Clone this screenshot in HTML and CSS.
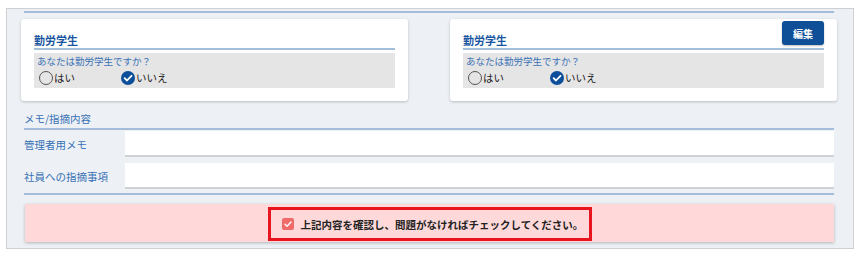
FILE: index.html
```html
<!DOCTYPE html>
<html lang="ja">
<head>
    <meta charset="UTF-8">
    <meta name="viewport" content="width=device-width, initial-scale=1.0">
    <title>勤労学生</title>
    <link rel="stylesheet" href="styles.css">
</head>
<body>

    <div class="panel">
        <div class="top-line"></div>

        <div class="cards">
            <div class="card">
                <div class="card-head">
                    <h3 class="card-title">勤労学生</h3>
                </div>
                <div class="question-box">
                    <div class="question">あなたは勤労学生ですか？</div>
                    <div class="radios">
                        <label class="radio">
                            <span class="radio-mark"></span>はい
                        </label>
                        <label class="radio">
                            <span class="radio-mark checked">
                                <svg viewBox="0 0 14 14" width="14" height="14"><path d="M3.6 7.2 L6 9.5 L10.5 4.8" fill="none" stroke="#fff" stroke-width="1.8" stroke-linecap="round" stroke-linejoin="round"/></svg>
                            </span>いいえ
                        </label>
                    </div>
                </div>
            </div>

            <div class="card">
                <div class="card-head">
                    <h3 class="card-title">勤労学生</h3>
                    <button class="edit-button">編集</button>
                </div>
                <div class="question-box">
                    <div class="question">あなたは勤労学生ですか？</div>
                    <div class="radios">
                        <label class="radio">
                            <span class="radio-mark"></span>はい
                        </label>
                        <label class="radio">
                            <span class="radio-mark checked">
                                <svg viewBox="0 0 14 14" width="14" height="14"><path d="M3.6 7.2 L6 9.5 L10.5 4.8" fill="none" stroke="#fff" stroke-width="1.8" stroke-linecap="round" stroke-linejoin="round"/></svg>
                            </span>いいえ
                        </label>
                    </div>
                </div>
            </div>
        </div>

        <div class="memo">
            <div class="memo-head">メモ/指摘内容</div>
            <div class="memo-row">
                <div class="memo-label">管理者用メモ</div>
                <input type="text" class="memo-input">
            </div>
            <div class="memo-row">
                <div class="memo-label">社員への指摘事項</div>
                <input type="text" class="memo-input">
            </div>
        </div>

        <div class="confirm-bar">
            <label class="confirm-box">
                <span class="check-mark">
                    <svg viewBox="0 0 12 12" width="12" height="12"><path d="M3 6.2 L5.1 8.2 L9 4" fill="none" stroke="#fff" stroke-width="1.4" stroke-linecap="round" stroke-linejoin="round"/></svg>
                </span>
                上記内容を確認し、問題がなければチェックしてください。
            </label>
        </div>
    </div>

</body>
</html>
```

FILE: styles.css
```css
* {
    box-sizing: border-box;
    font-family: "Noto Sans CJK JP", "Noto Sans", sans-serif;
}
body {
    margin: 0;
    padding: 8px 7px 0 6px;
    background-color: #ffffff;
    height: 256px;
    overflow: hidden;
}
.panel {
    width: 848px;
    height: 241px;
    border: 1px solid #cdcfd1;
    background-color: #edf1f5;
    padding-top: 2px;
}
.top-line {
    margin: 0 19px 0 17px;
    border-top: 2px solid #a4bdd9;
}
.cards {
    display: flex;
    gap: 42px;
    margin-top: 6px;
    padding-left: 14px;
}
.card {
    width: 387px;
    height: 82px;
    background-color: #ffffff;
    border-radius: 3px;
    box-shadow: 0 1px 3px rgba(0, 0, 0, 0.22);
    padding: 0 13px;
}
.card-head {
    height: 31px;
    display: flex;
    justify-content: space-between;
    align-items: flex-start;
    border-bottom: 2px solid #a4bdd9;
}
.card-title {
    margin: 14px 0 0 0;
    font-size: 11px;
    line-height: 14px;
    font-weight: bold;
    color: #1a55a0;
}
.edit-button {
    margin-top: 2px;
    width: 42px;
    height: 24px;
    border: none;
    border-radius: 3px;
    background-color: #0f4f98;
    color: #ffffff;
    font-size: 10px;
    font-weight: bold;
    box-shadow: 0 1px 2px rgba(0, 0, 0, 0.25);
    padding: 0;
}
.question-box {
    margin-top: 3px;
    height: 35px;
    background-color: #e5e5e5;
    padding: 1px 3px 0 3px;
}
.question {
    font-size: 9.5px;
    line-height: 15px;
    color: #3a72b6;
}
.radios {
    display: flex;
    align-items: center;
    height: 17px;
    padding-left: 2px;
}
.radio {
    display: flex;
    align-items: center;
    font-size: 10.5px;
    color: #222;
}
.radio:first-child {
    width: 82px;
}
.radio-mark {
    width: 14px;
    height: 14px;
    border: 1.5px solid #555;
    border-radius: 50%;
    margin-right: 1px;
    display: flex;
}
.radio-mark.checked {
    border: none;
    background-color: #0d4e9b;
}
.memo {
    margin: 9px 19px 0 17px;
    border-bottom: 2px solid #a4bdd9;
    padding-bottom: 4px;
}
.memo-head {
    height: 20px;
    line-height: 18px;
    font-size: 10.5px;
    color: #3a72b6;
    border-bottom: 2px solid #a4bdd9;
}
.memo-row {
    display: flex;
    align-items: center;
    margin-top: 1px;
}
.memo-row + .memo-row {
    margin-top: 6px;
}
.memo-label {
    width: 101px;
    font-size: 10.5px;
    color: #3a72b6;
}
.memo-input {
    flex: 1;
    height: 26px;
    border: none;
    border-bottom: 2px solid #cfd2d4;
    background-color: #ffffff;
    outline: none;
}
.confirm-bar {
    margin: 9px 19px 0 18px;
    height: 38px;
    background-color: #ffd9d9;
    box-shadow: 0 1px 3px rgba(0, 0, 0, 0.25);
    display: flex;
    justify-content: center;
    padding-top: 3px;
}
.confirm-box {
    width: 324px;
    height: 34px;
    border: 3px solid #e8141f;
    display: flex;
    align-items: center;
    padding-left: 11px;
    font-size: 10.5px;
    font-weight: bold;
    color: #222;
}
.check-mark {
    width: 12px;
    height: 12px;
    border-radius: 2px;
    background-color: #f06a6a;
    margin-right: 7px;
    display: flex;
}
```
